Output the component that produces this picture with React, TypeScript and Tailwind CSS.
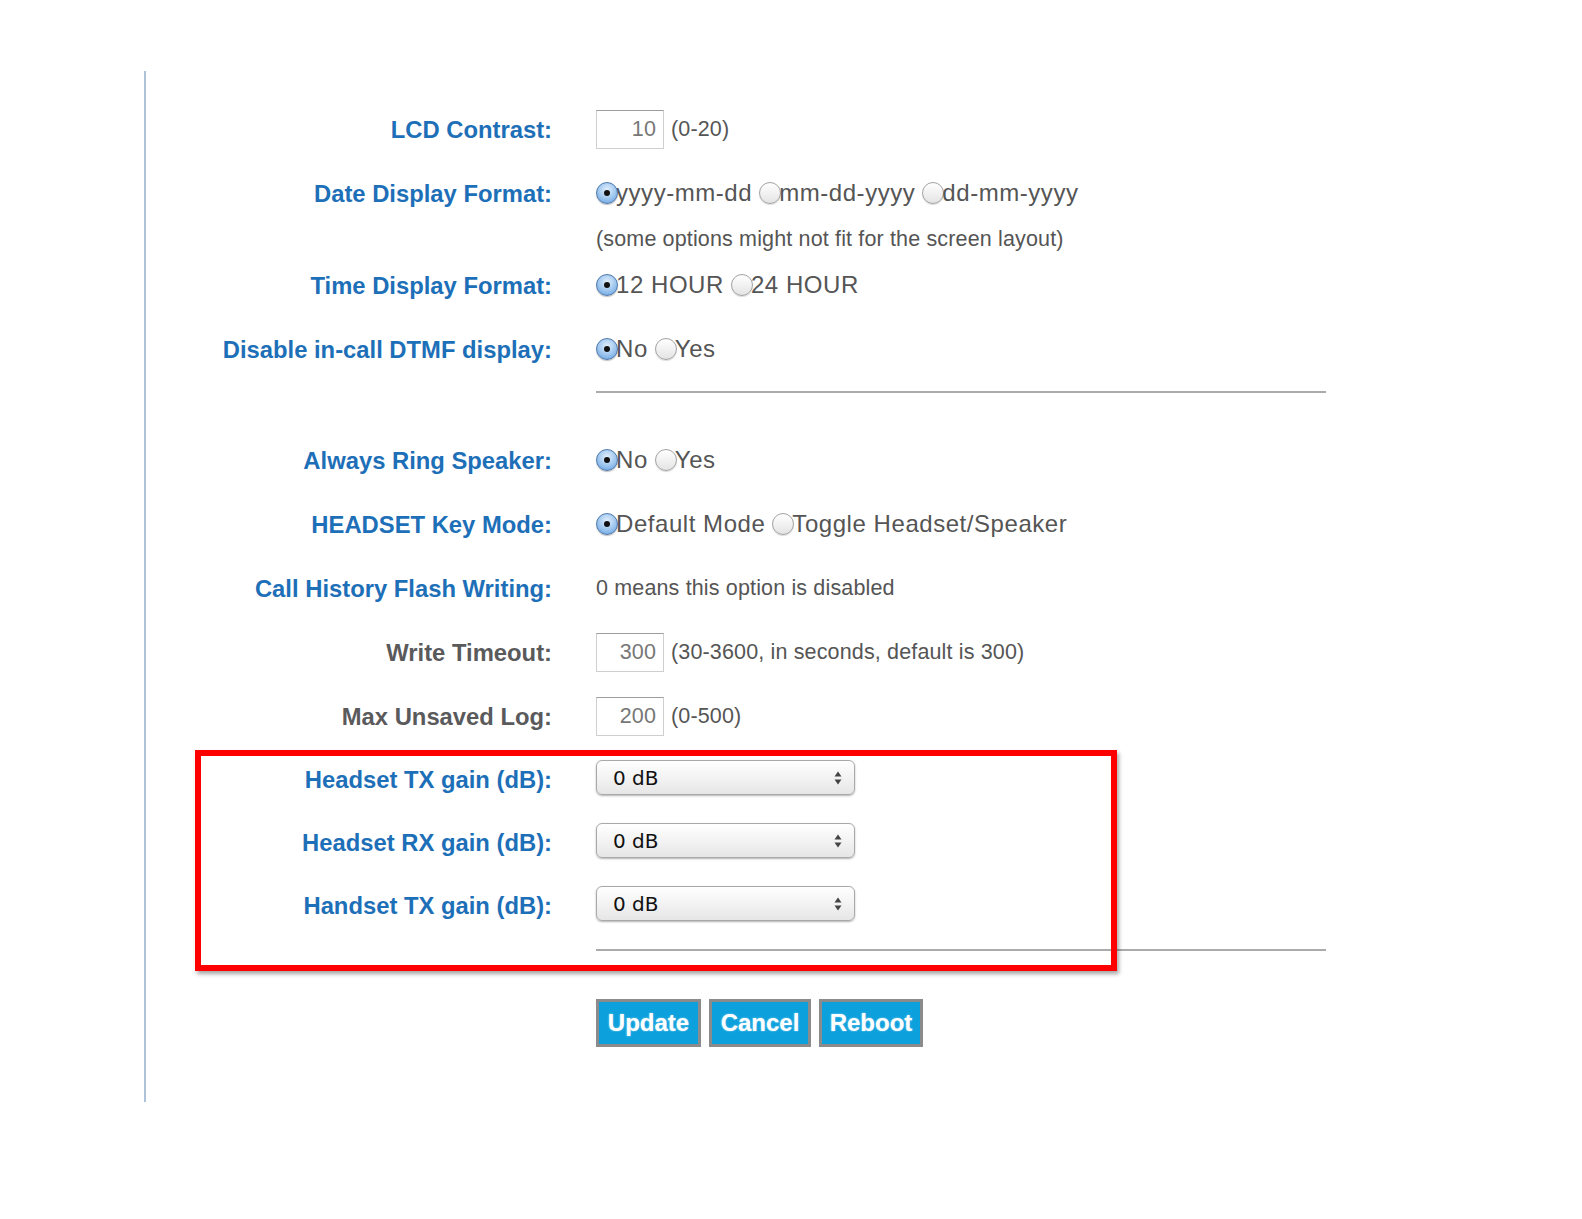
function Radio({ checked }: { checked?: boolean }) {
  if (checked) {
    return (
      <span className="relative inline-flex h-[22px] w-[22px] shrink-0 items-center justify-center rounded-full border border-[#4f79ad] bg-[radial-gradient(circle_at_50%_35%,#e3f0fc_0%,#a9cdf1_45%,#5f9de0_100%)] shadow-[0_1px_1px_rgba(0,0,0,0.25)]">
        <span className="h-[6px] w-[6px] rounded-full bg-[#111]" />
      </span>
    );
  }
  return (
    <span className="inline-block h-[22px] w-[22px] shrink-0 rounded-full border border-[#a3a3a3] bg-[linear-gradient(#ffffff,#e4e4e4)] shadow-[0_1px_1px_rgba(0,0,0,0.15)]" />
  );
}

function RadioGroup({ options }: { options: string[] }) {
  return (
    <div className="flex items-center gap-[7px] text-[24px] tracking-[0.55px] text-[#555]">
      {options.map((o, i) => (
        <span key={o} className="flex items-center">
          <Radio checked={i === 0} />
          <span className="-ml-[2px] leading-none">{o}</span>
        </span>
      ))}
    </div>
  );
}

function NumBox({ value, hint }: { value: string; hint: string }) {
  return (
    <div className="flex items-center gap-[7px] text-[21.5px] tracking-[0.15px] text-[#555]">
      <input
        readOnly
        value={value}
        className="h-[39px] w-[68px] border border-[#cfcfcf] border-t-[#9d9d9d] bg-white pr-[7px] text-right text-[21.5px] text-[#777] outline-none"
      />
      <span>{hint}</span>
    </div>
  );
}

function Select() {
  return (
    <div className="-mt-[4px] flex h-[35px] w-[259px] items-center justify-between rounded-[6px] border border-[#a9a9a9] bg-[linear-gradient(#ffffff,#f3f3f3_50%,#e6e6e6)] pl-[16px] pr-[12px] shadow-[0_1px_2px_rgba(0,0,0,0.3)]">
      <span className="font-['DejaVu_Sans',sans-serif] text-[20px] leading-none text-[#111]">0 dB</span>
      <svg width="8" height="14" viewBox="0 0 8 14">
        <polygon points="0.5,5.5 4,0.5 7.5,5.5" fill="#444" />
        <polygon points="0.5,8.5 4,13.5 7.5,8.5" fill="#444" />
      </svg>
    </div>
  );
}

function Row({
  label,
  gray,
  h = "h-[64px]",
  children,
}: {
  label?: string;
  gray?: boolean;
  h?: string;
  children: React.ReactNode;
}) {
  return (
    <div className={`flex items-center ${h}`}>
      <div
        className={`mt-[1px] w-[406px] shrink-0 text-right text-[23.8px] font-bold leading-none ${
          gray ? "text-[#5a5a5c]" : "text-[#1d6fb8]"
        }`}
      >
        {label}
      </div>
      <div className="ml-[44px] flex items-center">{children}</div>
    </div>
  );
}

export default function App() {
  return (
    <div className="relative h-[1219px] w-[1582px] overflow-hidden bg-white font-['Liberation_Sans',Arial,sans-serif]">
      <div className="pl-[144px] pt-[71px]">
        <div className="h-[1031px] border-l-2 border-[#aec2da] pt-[26px]">
          <Row label="LCD Contrast:">
            <NumBox value="10" hint="(0-20)" />
          </Row>
          <Row label="Date Display Format:">
            <RadioGroup options={["yyyy-mm-dd", "mm-dd-yyyy", "dd-mm-yyyy"]} />
          </Row>
          <Row h="h-[28px]">
            <span className="text-[21.5px] tracking-[0.15px] text-[#555]">
              (some options might not fit for the screen layout)
            </span>
          </Row>
          <Row label="Time Display Format:">
            <RadioGroup options={["12 HOUR", "24 HOUR"]} />
          </Row>
          <Row label="Disable in-call DTMF display:">
            <RadioGroup options={["No", "Yes"]} />
          </Row>
          <div className="ml-[450px] mt-[10px] mb-[35px] h-[2px] w-[730px] bg-[#ababab]" />

          <Row label="Always Ring Speaker:">
            <RadioGroup options={["No", "Yes"]} />
          </Row>
          <Row label="HEADSET Key Mode:">
            <RadioGroup options={["Default Mode", "Toggle Headset/Speaker"]} />
          </Row>
          <Row label="Call History Flash Writing:">
            <span className="text-[21.5px] tracking-[0.15px] text-[#555]">0 means this option is disabled</span>
          </Row>
          <Row label="Write Timeout:" gray>
            <NumBox value="300" hint="(30-3600, in seconds, default is 300)" />
          </Row>
          <Row label="Max Unsaved Log:" gray>
            <NumBox value="200" hint="(0-500)" />
          </Row>
          <Row label="Headset TX gain (dB):" h="h-[63px]">
            <Select />
          </Row>
          <Row label="Headset RX gain (dB):" h="h-[63px]">
            <Select />
          </Row>
          <Row label="Handset TX gain (dB):" h="h-[63px]">
            <Select />
          </Row>
          <div className="ml-[450px] mt-[12px] h-[2px] w-[730px] bg-[#ababab]" />

          <div className="ml-[450px] mt-[48px] flex gap-[8px]">
            {[
              ["Update", "w-[105px]"],
              ["Cancel", "w-[102px]"],
              ["Reboot", "w-[104px]"],
            ].map(([t, w]) => (
              <button
                key={t}
                className={`h-[48px] ${w} border-[3px] border-[#8b8b8b] bg-[#0ca0dd] text-[24px] font-bold text-white [text-shadow:0_0_2px_rgba(255,255,255,0.6)]`}
              >
                {t}
              </button>
            ))}
          </div>
        </div>
      </div>

      <div className="absolute left-[195px] top-[750px] h-[221px] w-[922px] border-[6px] border-[#f00] shadow-[2px_3px_4px_rgba(0,0,0,0.35)]" />
    </div>
  );
}
